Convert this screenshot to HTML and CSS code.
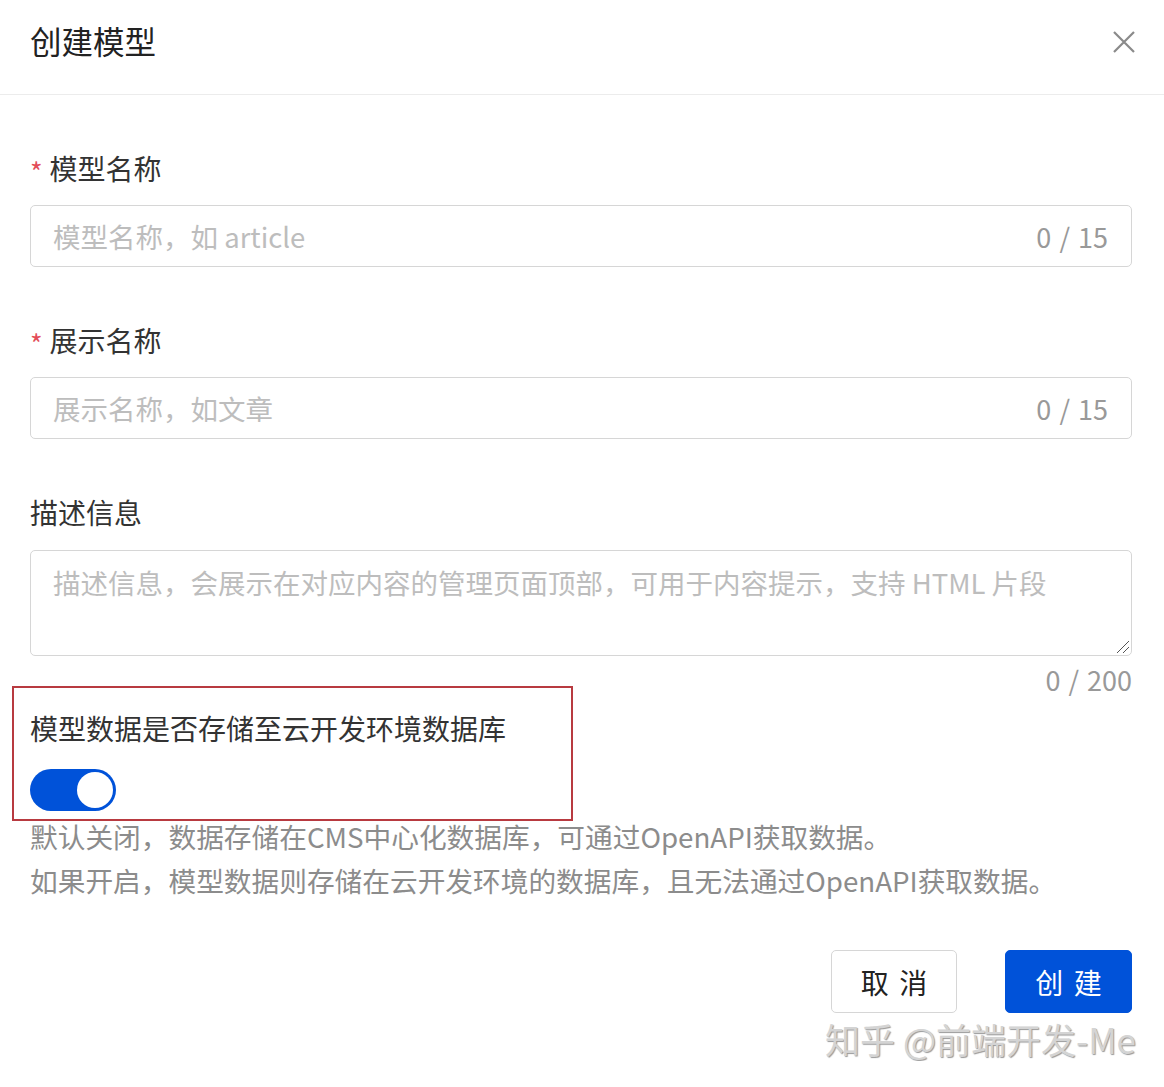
FILE: index.html
```html
<!DOCTYPE html>
<html lang="zh-CN">
<head>
  <meta charset="utf-8">
  <title>创建模型</title>
  <link rel="stylesheet" href="styles.css">
</head>
<body>
  <section class="dialog">
    <header class="dialog-header">
      <h1 class="dialog-title">创建模型</h1>
      <span class="dialog-close">
        <svg width="24" height="24" viewBox="0 0 24 24"><path d="M2 2 L22 22 M22 2 L2 22" stroke="#8a8a8a" stroke-width="2.2" fill="none"/></svg>
      </span>
    </header>

    <div class="dialog-body">
      <div class="field">
        <label class="field-label"><span class="required">*</span>模型名称</label>
        <div class="input">
          <span class="placeholder">模型名称，如 article</span>
          <span class="counter">0 / 15</span>
        </div>
      </div>

      <div class="field">
        <label class="field-label"><span class="required">*</span>展示名称</label>
        <div class="input">
          <span class="placeholder">展示名称，如文章</span>
          <span class="counter">0 / 15</span>
        </div>
      </div>

      <div class="field">
        <label class="field-label">描述信息</label>
        <div class="textarea">
          <span class="placeholder">描述信息，会展示在对应内容的管理页面顶部，可用于内容提示，支持 HTML 片段</span>
          <svg class="resize" width="14" height="14" viewBox="0 0 14 14"><path d="M13 1 L1 13 M13 7 L7 13" stroke="#555" stroke-width="1" fill="none"/></svg>
        </div>
        <div class="textarea-counter">0 / 200</div>
      </div>

      <div class="field switch-field">
        <label class="field-label">模型数据是否存储至云开发环境数据库</label>
        <div class="switch"><span class="switch-knob"></span></div>
      </div>

      <div class="help">
        <p>默认关闭，数据存储在CMS中心化数据库，可通过OpenAPI获取数据。</p>
        <p>如果开启，模型数据则存储在云开发环境的数据库，且无法通过OpenAPI获取数据。</p>
      </div>
    </div>

    <footer class="dialog-footer">
      <button class="btn btn-cancel">取 消</button>
      <button class="btn btn-primary">创 建</button>
    </footer>
    <div class="watermark">知乎 @前端开发-Me</div>
  </section>
</body>
</html>
```

FILE: styles.css
```css
body {
   margin: 0;
   background: #fff;
   font-family: "Noto Sans CJK SC", "Noto Sans", sans-serif;
   color: #333;
}

.dialog {
   width: 1164px;
}

.dialog-header {
   display: flex;
   align-items: center;
   justify-content: space-between;
   padding: 20px 28px 34px 30px;
   border-bottom: 1px solid #ececec;
}

.dialog-title {
   margin: 0;
   font-size: 31.5px;
   line-height: 40px;
   font-weight: 400;
   color: #222;
}

.dialog-close {
   display: flex;
   padding-top: 4px;
}

.dialog-body {
   padding: 0 32px 0 30px;
}

.field {
   padding-top: 53px;
}

.field-label {
   display: block;
   font-size: 28px;
   line-height: 40px;
   height: 40px;
   color: #333;
}

.required {
   color: #e34d59;
   font-size: 27px;
   line-height: 0;
   margin-right: 7px;
   vertical-align: -3px;
}

.input {
   margin-top: 17px;
   height: 60px;
   border: 1px solid #d6d6d6;
   border-radius: 5px;
   display: flex;
   align-items: center;
   justify-content: space-between;
   padding: 0 23px 0 22px;
}

.placeholder {
   font-size: 27.5px;
   color: #bdbdbd;
}

.counter {
   font-size: 27px;
   color: #999;
   word-spacing: 2px;
}

.textarea {
   position: relative;
   margin-top: 18px;
   border: 1px solid #d6d6d6;
   border-radius: 5px;
   padding: 11px 22px 0 22px;
   box-sizing: border-box;
   height: 106px;
}

.resize {
   position: absolute;
   right: 1px;
   bottom: 1px;
}

.textarea-counter {
   text-align: right;
   font-size: 27px;
   line-height: 36px;
   color: #999;
   word-spacing: 2px;
   margin-top: 6px;
}

.switch-field {
   position: relative;
   padding-top: 10px;
}

.switch-field::after {
   content: "";
   position: absolute;
   left: -18px;
   top: -12px;
   width: 557px;
   height: 131px;
   border: 2px solid #b83a40;
}

.switch {
   margin-top: 21px;
   width: 86px;
   height: 42px;
   border-radius: 21px;
   background: #0052d9;
   display: flex;
   align-items: center;
   justify-content: flex-end;
   padding: 0 3px;
   box-sizing: border-box;
}

.switch-knob {
   width: 36px;
   height: 36px;
   border-radius: 50%;
   background: #fff;
}

.help {
   margin-top: 3px;
   font-size: 27.7px;
   line-height: 44px;
   color: #8c8c8c;
}

.help p {
   margin: 0;
}

.dialog-footer {
   display: flex;
   justify-content: flex-end;
   gap: 48px;
   padding: 48px 32px 0 30px;
}

.btn {
   font-family: inherit;
   font-size: 28px;
   height: 63px;
   border-radius: 5px;
   letter-spacing: 2px;
   padding: 0 0 0 2px;
   white-space: nowrap;
   cursor: pointer;
}

.btn-cancel {
   width: 126px;
   background: #fff;
   border: 1px solid #d6d6d6;
   color: #222;
}

.btn-primary {
   width: 127px;
   background: #0052d9;
   border: 1px solid #0052d9;
   color: #fff;
}

.watermark {
   text-align: right;
   padding: 4px 28px 0 0;
   font-size: 35px;
   line-height: 44px;
   color: #d4d4d4;
   text-shadow: 1px 1px 1px #999;
}
```
